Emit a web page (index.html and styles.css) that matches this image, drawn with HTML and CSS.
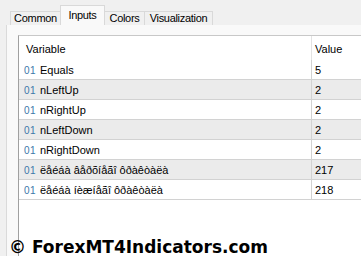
FILE: index.html
```html
<!DOCTYPE html>
<html>
<head>
<meta charset="utf-8">
<link rel="stylesheet" href="styles.css">
</head>
<body>
<div class="tabs">
  <div class="tab t-common">Common</div>
  <div class="tab t-inputs active">Inputs</div>
  <div class="tab t-colors">Colors</div>
  <div class="tab t-vis">Visualization</div>
</div>
<div class="panel">
  <div class="list">
    <div class="row head"><div class="c-name">Variable</div><div class="c-val">Value</div></div>
    <div class="row"><div class="c-name"><span class="ico">01</span>Equals</div><div class="c-val">5</div></div>
    <div class="row alt"><div class="c-name"><span class="ico">01</span>nLeftUp</div><div class="c-val">2</div></div>
    <div class="row"><div class="c-name"><span class="ico">01</span>nRightUp</div><div class="c-val">2</div></div>
    <div class="row alt"><div class="c-name"><span class="ico">01</span>nLeftDown</div><div class="c-val">2</div></div>
    <div class="row"><div class="c-name"><span class="ico">01</span>nRightDown</div><div class="c-val">2</div></div>
    <div class="row alt"><div class="c-name"><span class="ico">01</span>ëåéáà âåðõíåãî ôðàêòàëà</div><div class="c-val">217</div></div>
    <div class="row"><div class="c-name"><span class="ico">01</span>ëåéáà íèæíåãî ôðàêòàëà</div><div class="c-val">218</div></div>
  </div>
</div>
<div class="watermark">© ForexMT4Indicators.com</div>
</body>
</html>
```
FILE: styles.css
```css
html, body {
  margin: 0;
  padding: 0;
}
body {
  width: 361px;
  height: 256px;
  overflow: hidden;
  background: #f0f0f0;
  font-family: "Liberation Sans", Arial, sans-serif;
  font-size: 11px;
  color: #000;
  position: relative;
}
.tabs {
  display: flex;
  align-items: flex-end;
  height: 25px;
  padding-left: 10px;
  box-sizing: border-box;
}
.tab {
  box-sizing: border-box;
  height: 14px;
  line-height: 13px;
  text-align: center;
  border: 1px solid #d9d9d9;
  border-bottom: none;
  border-right: none;
  background: #f0f0f0;
  letter-spacing: -0.3px;
  white-space: nowrap;
}
.t-common { width: 50px; }
.t-inputs { width: 45px; }
.t-colors { width: 40px; }
.t-vis { width: 69px; border-right: 1px solid #d9d9d9; }
.tab.active {
  height: 20px;
  line-height: 18px;
  background: #f9f9f9;
  border-right: 1px solid #d9d9d9;
  margin-right: -1px;
}
.panel {
  margin-left: 6px;
  height: 231px;
  box-sizing: border-box;
  background: #f9f9f9;
  border-left: 1px solid #dadada;
  padding: 10px 0 0 11px;
}
.list {
  background: #fff;
  border-left: 1px solid #a0a0a0;
  border-top: 1px solid #c8c8c8;
  height: 100%;
}
.row {
  display: flex;
  height: 19px;
  line-height: 21px;
  border-bottom: 1px solid #d2d2d2;
}
.row.head {
  height: 24px;
  line-height: 26px;
  border-bottom: none;
}
.row.alt {
  background: #ebebeb;
}
.c-name {
  width: 287px;
  padding-left: 5px;
  white-space: nowrap;
  overflow: hidden;
  border-right: 1px solid #d2d2d2;
}
.head .c-name {
  width: 285px;
  padding-left: 7px;
  border-right: 1px solid #e3e3e3;
}
.c-val {
  padding-left: 3px;
}
.ico {
  display: inline-block;
  width: 16px;
  color: #3b78aa;
  font-size: 10px;
  letter-spacing: 0.5px;
}
.watermark {
  position: absolute;
  left: 9px;
  top: 237px;
  font-family: "DejaVu Sans", Verdana, sans-serif;
  font-weight: bold;
  font-size: 17px;
  line-height: 20px;
  color: #000;
}
```
